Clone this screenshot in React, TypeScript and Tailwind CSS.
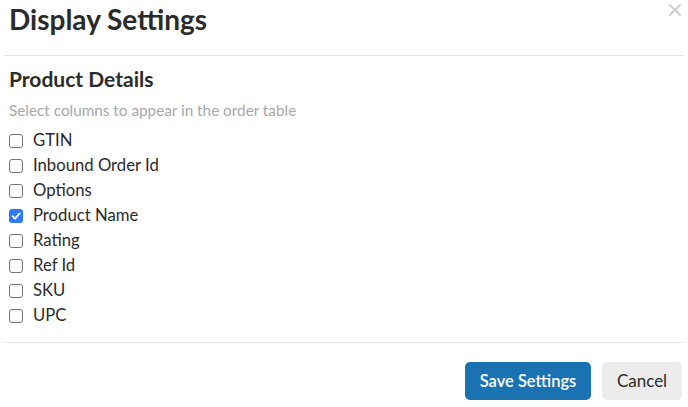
import React, { useState } from "react";

const items = ["GTIN", "Inbound Order Id", "Options", "Product Name", "Rating", "Ref Id", "SKU", "UPC"];

export default function App() {
  const [checked, setChecked] = useState<Record<string, boolean>>({ "Product Name": true });
  return (
    <div className="w-[688px] h-[407px] bg-white text-[#333] relative" style={{ fontFamily: "Lato, 'Open Sans', sans-serif" }}>
      <button className="absolute left-[669px] top-[4px] w-[12px] h-[12px]">
        <svg width="12" height="12" viewBox="0 0 12 12">
          <path d="M1 1 L11 11 M11 1 L1 11" stroke="#cfcfcf" strokeWidth="2" strokeLinecap="round" />
        </svg>
      </button>
      <div className="px-[9px] pt-[1px] h-[55px]">
        <h1 className="text-[28px] font-bold leading-[36px] text-[#2b2b2b]">Display Settings</h1>
      </div>
      <div className="mx-[3px] h-px bg-[#e5e5e5]" />
      <div className="px-[9px] pt-[10px] h-[286px]">
        <h2 className="text-[21px] font-bold leading-[26px] text-[#2b2b2b]">Product Details</h2>
        <p className="text-[15.3px] text-[#a8a8a8] leading-[20px] mt-[8px]">Select columns to appear in the order table</p>
        <div className="mt-[8px] flex flex-col">
          {items.map((it) => {
            const on = !!checked[it];
            return (
              <label
                key={it}
                className="flex items-center h-[25px] gap-[10px] cursor-pointer"
                onClick={() => setChecked({ ...checked, [it]: !on })}
              >
                <span
                  className={
                    on
                      ? "w-[14px] h-[14px] rounded-[3px] bg-[#2f7bf5] flex items-center justify-center"
                      : "w-[14px] h-[14px] rounded-[3px] border border-[#767676] bg-white"
                  }
                >
                  {on && (
                    <svg width="10" height="10" viewBox="0 0 10 10">
                      <path d="M1.5 5.2 L4 7.6 L8.6 2.4" stroke="white" strokeWidth="1.8" fill="none" strokeLinecap="round" strokeLinejoin="round" />
                    </svg>
                  )}
                </span>
                <span className="text-[16.7px] text-[#2b2b2b]">{it}</span>
              </label>
            );
          })}
        </div>
      </div>
      <div className="mx-[3px] h-px bg-[#e5e5e5]" />
      <div className="flex justify-end gap-[11px] pt-[19px] pr-[6px]">
        <button className="h-[38px] w-[126px] rounded-[5px] bg-[#1b72b2] text-white text-[16.5px] font-semibold">Save Settings</button>
        <button className="h-[38px] w-[80px] rounded-[5px] bg-[#ececec] text-[#2b2b2b] text-[17px]">Cancel</button>
      </div>
    </div>
  );
}
